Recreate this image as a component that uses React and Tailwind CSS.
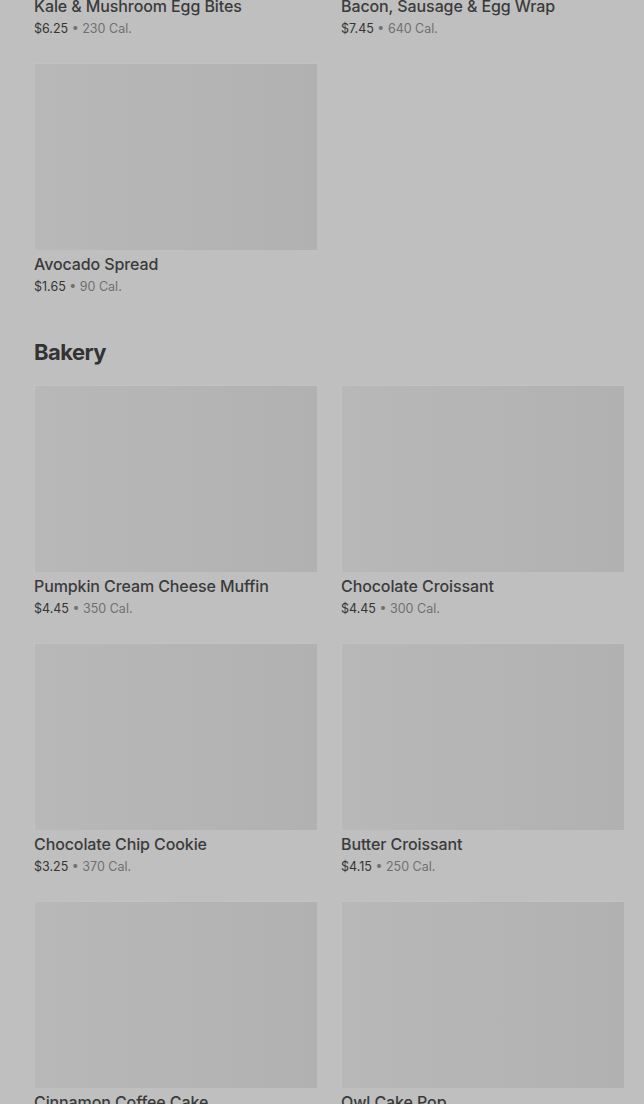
const sections = [
  {
    title: null,
    items: [
      { name: 'Kale & Mushroom Egg Bites', price: '$6.25', cal: '230 Cal.' },
      { name: 'Bacon, Sausage & Egg Wrap', price: '$7.45', cal: '640 Cal.' },
      { name: 'Avocado Spread', price: '$1.65', cal: '90 Cal.' },
    ],
  },
  {
    title: 'Bakery',
    items: [
      { name: 'Pumpkin Cream Cheese Muffin', price: '$4.45', cal: '350 Cal.' },
      { name: 'Chocolate Croissant', price: '$4.45', cal: '300 Cal.' },
      { name: 'Chocolate Chip Cookie', price: '$3.25', cal: '370 Cal.' },
      { name: 'Butter Croissant', price: '$4.15', cal: '250 Cal.' },
      { name: 'Cinnamon Coffee Cake', price: '$3.25', cal: '390 Cal.' },
      { name: 'Owl Cake Pop', price: '$3.45', cal: '160 Cal.' },
    ],
  },
];

function Card({ item }) {
  return (
    <div className="flex flex-col">
      <div className="h-[187px] bg-gradient-to-r from-[#b8b8b8] to-[#b1b1b1] shadow-[inset_1px_1px_0_#c2c2c2]" />
      <div className="mt-1 text-[16px] leading-5 font-medium text-[#3b3b3b] tracking-[-0.1px]">{item.name}</div>
      <div className="mt-1 text-[12.5px] leading-[18px] text-[#707070]">
        <span className="text-[#353535]">{item.price}</span> • {item.cal}
      </div>
    </div>
  );
}

export default function App() {
  return (
    <div className="h-[1104px] overflow-hidden bg-[#bfbfbf] font-['Inter',sans-serif]">
      <div className="pl-[34px] pr-[20px] -mt-[195px]">
        {sections.map((s, i) => (
          <section key={i} className={i > 0 ? 'mt-10' : ''}>
            {s.title && (
              <h2 className="text-[22px] leading-8 font-bold text-[#333] tracking-tight mb-[17px]">{s.title}</h2>
            )}
            <div className="grid grid-cols-2 gap-x-6 gap-y-[25px]">
              {s.items.map((it) => (
                <Card key={it.name} item={it} />
              ))}
            </div>
          </section>
        ))}
      </div>
    </div>
  );
}
